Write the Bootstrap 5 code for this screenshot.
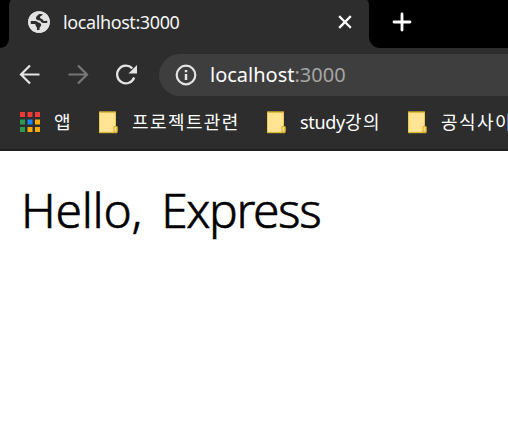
<!DOCTYPE html>
<html lang="ko">
<head>
<meta charset="utf-8">
<title>localhost:3000</title>
<link href="https://cdn.jsdelivr.net/npm/bootstrap@5.3.0/dist/css/bootstrap.min.css" rel="stylesheet">
<style>
body{font-family:"Noto Sans","Noto Sans CJK KR",sans-serif;color:#000}
.browser-chrome{background:#2d2d2d;height:151px;border-bottom:2px solid #211f20}
.tab-strip{height:48px;background:#000}
.strip-edge{background:#2d2d2d}
.strip-edge>div{background:#000;height:48px}
.edge-left{width:9px;border-bottom-right-radius:9px}
.edge-right{border-bottom-left-radius:11px;padding-left:23px}
.active-tab{width:360px;background:#2d2d2d;border-radius:8px 8px 0 0;margin-top:-3px;height:51px;padding:3px 14px 0 19px}
.active-tab svg,.edge-right svg{margin-bottom:4px}
.tab-title{font-size:18px;line-height:24px;color:#f5f5f5;margin-left:13px;letter-spacing:-.4px;padding-bottom:5px}
.tool-row{height:54px;padding-left:18px}
.address-pill{height:42px;background:#3e3e3e;border-radius:21px 0 0 21px;margin-left:20px;padding-left:15px}
.address-text{font-size:20px;line-height:28px;margin-left:12px;color:#fff}
.address-text .port{color:#a5a5a5}
.bookmarks-row{height:47px;padding-left:20px;font-size:18px;color:#fff}
.bookmarks-row svg{margin-top:9px}
.bookmarks-row .apps-icon{margin-top:10px}
.bookmark-label{line-height:26px;display:block;flex-shrink:0;margin:6px 0 0 14px}
.label-apps{width:45px}
.label-project{width:135px}
.label-study{width:108px}
.latin{letter-spacing:-.3px}
.hangul{letter-spacing:1.4px;font-family:"Noto Sans CJK KR",sans-serif}
.hello-text{font-size:48px;line-height:60px;font-weight:300;-webkit-text-stroke:.6px #000;margin:29px 0 0 21px;word-spacing:7px;letter-spacing:-.3px}
.hello-text span{letter-spacing:-1.400px}
svg{display:block;flex-shrink:0}
</style>
<script src="https://cdn.jsdelivr.net/npm/bootstrap@5.3.0/dist/js/bootstrap.bundle.min.js"></script>
</head>
<body class="bg-white overflow-hidden">
<svg width="0" height="0" class="position-absolute"><defs>
<symbol id="folder" viewBox="0 0 19 23"><path d="M.5 1.200h16v14.500H18v6H.5z" fill="#ffe493" stroke="#edc84c"/><path d="M0 1h17M0 21.500h18" stroke="#dfb631"/><path d="M15 21v-5.500h3V21z" fill="#ffe07c" stroke="#d9ad27"/></symbol>
</defs></svg>
<header class="browser-chrome">
  <div class="tab-strip d-flex">
    <div class="strip-edge"><div class="edge-left"></div></div>
    <div class="active-tab d-flex align-items-center flex-shrink-0">
      <svg width="22" height="22" viewBox="0 0 22 22"><circle cx="11" cy="11" r="10.800" fill="#e2e2e2"/><path d="M15 3C14.500 5 12 4.500 12 6.500c0 1.500 2.500 1 3 2.500.4 1.200 2 1 4.500.8V12h-4c-2 0-2.500-1.300-3.200-2.300C11 9 8 9.500 8 7.200 8 5 10 4.500 11 3z" fill="#2d2d2d"/><path d="M2.500 10H7c2.500 0 2.500 1.500 4.500 1.800 2 .4 2.200 3 .8 4-1 .7-.8 2-.8 3.200H9c-.2-1.700.2-2.800-.8-3.500-1-.8 0-2.300-1.700-2.500h-4z" fill="#2d2d2d"/><circle cx="11" cy="11" r="9.700" fill="none" stroke="#e2e2e2" stroke-width="2.200"/></svg>
      <span class="tab-title">localhost:3000</span>
      <svg class="ms-auto" width="20" height="20" viewBox="0 0 20 20"><path d="M5 5l10 10M15 5L5 15" stroke="#fff" stroke-width="2.300" stroke-linecap="square"/></svg>
    </div>
    <div class="strip-edge flex-grow-1"><div class="edge-right d-flex align-items-center"><svg width="20" height="20" viewBox="0 0 20 20"><path d="M10 2v16M2 10h16" stroke="#fff" stroke-width="2.800" stroke-linecap="round"/></svg></div></div>
  </div>
  <div class="tool-row d-flex align-items-center">
    <svg width="24" height="24" viewBox="0 0 24 24"><path d="M21.500 11.500H3.500M12 2.500L3 11.500l9 9" fill="none" stroke="#e4e4e4" stroke-width="2.200"/></svg>
    <svg class="ms-4" width="24" height="24" viewBox="0 0 24 24"><path d="M2.500 11.500h18M12 2.500l9 9-9 9" fill="none" stroke="#777" stroke-width="2.200"/></svg>
    <svg class="ms-4" width="25" height="24" viewBox="0 0 25 24"><path d="M20.200 14.500A8.800 8.800 0 1 1 18.300 5.400" fill="none" stroke="#e4e4e4" stroke-width="2.300"/><path d="M23 2v8.500h-8.500z" fill="#e4e4e4"/></svg>
    <div class="address-pill d-flex align-items-center flex-grow-1">
      <svg width="24" height="24" viewBox="0 0 24 24"><circle cx="12" cy="12" r="9.300" fill="none" stroke="#e4e4e4" stroke-width="2.200"/><path d="M12 11v6M12 7v2.200" stroke="#e4e4e4" stroke-width="2.500"/></svg>
      <span class="address-text">localhost<span class="port">:3000</span></span>
    </div>
  </div>
  <nav class="bookmarks-row d-flex align-items-start text-nowrap" aria-label="Bookmarks">
    <svg class="apps-icon" width="20" height="20" viewBox="0 0 20 20"><path d="M0 0h5v5H0zM7.500 0h5v5h-5zM15 0h5v5h-5z" fill="#ee3b37"/><path d="M0 7.500h5v5H0zM0 15h5v5H0z" fill="#2e9b50"/><path d="M7.500 7.500h5v5h-5z" fill="#1b86f9"/><path d="M15 7.500h5v5h-5zM7.500 15h5v5h-5zM15 15h5v5h-5z" fill="#fba906"/></svg>
    <span class="bookmark-label hangul label-apps">앱</span>
    <svg width="19" height="23"><use href="#folder"/></svg>
    <span class="bookmark-label hangul label-project">프로젝트관련</span>
    <svg width="19" height="23"><use href="#folder"/></svg>
    <span class="bookmark-label label-study"><span class="latin">study</span><span class="hangul">강의</span></span>
    <svg width="19" height="23"><use href="#folder"/></svg>
    <span class="bookmark-label hangul">공식사이</span>
  </nav>
</header>
<main><p class="hello-text">Hello, <span>Express</span></p></main>
</body>
</html>
